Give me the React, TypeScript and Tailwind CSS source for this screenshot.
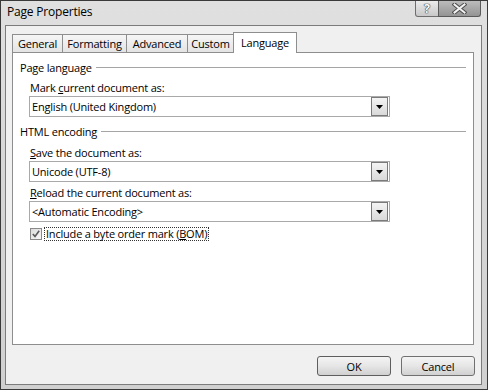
import React from "react";

const F = "font-['Open_Sans','Noto_Sans',sans-serif] tracking-[-0.2px]";

function Combo({ value }: { value: string }) {
  return (
    <div className="ml-[16px] flex h-[21px] w-[361px] items-center border border-[#a9a9a9] bg-white pl-[2px] pr-[1px]">
      <span className="flex-1 text-[11px] leading-[15px] text-black">{value}</span>
      <div className="flex h-[19px] w-[17px] items-center justify-center border border-[#7a7a7a] bg-gradient-to-b from-[#f4f4f4] to-[#d9d9d9]">
        <svg width="7" height="4" viewBox="0 0 7 4">
          <path d="M0 0 H7 L3.5 4 Z" fill="#000" />
        </svg>
      </div>
    </div>
  );
}

function Heading({ text }: { text: string }) {
  return (
    <div className="flex h-[15px] items-center pl-[7px] pr-[7px]">
      <span className="text-[11px] leading-[15px] text-black">{text}</span>
      <div className="ml-[4px] h-px flex-1 bg-[#a5a5a5]" />
    </div>
  );
}

function Label({ children }: { children: React.ReactNode }) {
  return (
    <div className="h-[15px] pl-[17px] text-[11px] leading-[15px] text-black">{children}</div>
  );
}

export default function App() {
  const tabs = [
    { name: "General", w: "w-[51px]" },
    { name: "Formatting", w: "w-[65px]" },
    { name: "Advanced", w: "w-[62px]" },
    { name: "Custom", w: "w-[47px]" },
  ];
  return (
    <div
      className={`${F} relative flex h-[390px] w-[488px] flex-col border border-[#3a3a3a] bg-gradient-to-b from-[#e0e0e0] via-[#d6d6d6] to-[#d0d0d0]`}
    >
      {/* title bar */}
      <div className="flex h-[24px] items-start justify-between">
        <div className="pl-[6px] pt-[3px] text-[12px] leading-[16px] text-black">Page Properties</div>
        <div className="mr-[6px] flex">
          <div className="flex h-[16px] w-[24px] items-center justify-center rounded-bl-[3px] border border-t-0 border-[#6e6e6e] bg-gradient-to-b from-[#ececec] to-[#c8c8c8]">
            <span className="text-[12px] font-bold leading-[14px] text-white [text-shadow:0_0_1px_#333,0_0_1px_#333,0_0_1px_#333]">?</span>
          </div>
          <div className="-ml-px flex h-[16px] w-[43px] items-center justify-center rounded-br-[3px] border border-t-0 border-[#5a5a5a] bg-gradient-to-b from-[#bcbcbc] to-[#949494]">
            <svg width="15" height="11" viewBox="0 0 15 11">
              <path d="M2.5 1.5 L12.5 9.5 M12.5 1.5 L2.5 9.5" stroke="#4a4a4a" strokeWidth="4" strokeLinecap="square" />
              <path d="M2.5 1.5 L12.5 9.5 M12.5 1.5 L2.5 9.5" stroke="#f2f2f2" strokeWidth="2" strokeLinecap="square" />
            </svg>
          </div>
        </div>
      </div>

      {/* client area */}
      <div className="ml-[4px] flex h-[360px] w-[477px] flex-col border border-[#7c7c7c] bg-[#f0f0f0]">
        <div className="pl-[6px] pt-[6px]">
          {/* tab strip */}
          <div className="flex h-[20px] items-end">
            {tabs.map((t, i) => (
              <div
                key={t.name}
                className={`${t.w} ${i > 0 ? "-ml-px" : ""} flex h-[18px] items-center justify-center border border-b-0 border-[#8e8e8e] bg-gradient-to-b from-[#f6f6f6] to-[#e4e4e4] text-[11px] leading-[15px] text-black`}
              >
                {t.name}
              </div>
            ))}
            <div className="relative z-10 -mb-px -ml-px flex h-[21px] w-[64px] items-start justify-center border border-b-0 border-[#8e8e8e] bg-white pt-[2px] text-[11px] leading-[15px] text-black">
              Language
            </div>
          </div>
          {/* panel */}
          <div className="flex h-[293px] w-[462px] flex-col border border-[#8e8e8e] bg-white">
            <div className="mt-[7px]">
              <Heading text="Page language" />
            </div>
            <div className="mt-[5px]">
              <Label>
                Mark <u>c</u>urrent document as:
              </Label>
            </div>
            <div className="mt-[1px]">
              <Combo value="English (United Kingdom)" />
            </div>
            <div className="mt-[7px]">
              <Heading text="HTML encoding" />
            </div>
            <div className="mt-[6px]">
              <Label>
                <u>S</u>ave the document as:
              </Label>
            </div>
            <div className="mt-[1px]">
              <Combo value="Unicode (UTF-8)" />
            </div>
            <div className="mt-[3px]">
              <Label>
                <u>R</u>eload the current document as:
              </Label>
            </div>
            <div className="mt-[1px]">
              <Combo value="<Automatic Encoding>" />
            </div>
            <div className="mt-[5px] flex h-[14px] items-center pl-[17px]">
              <div className="flex h-[12px] w-[12px] items-center justify-center border border-[#8a8a8a] bg-gradient-to-br from-[#dcdcdc] to-[#f8f8f8]">
                <svg width="8" height="8" viewBox="0 0 8 8">
                  <path d="M0.8 4 L3 6.4 L7.2 0.8" stroke="#5a5a5a" strokeWidth="1.6" fill="none" />
                </svg>
              </div>
              <div className="ml-[2px] border border-dotted border-[#333] px-[1px] text-[11px] leading-[12px] text-black">
                Include a byte order mark (<u>B</u>OM)
              </div>
            </div>
          </div>
        </div>
        {/* buttons */}
        <div className="mt-[11px] flex justify-end gap-[10px] pr-[6px]">
          <div className="flex h-[20px] w-[74px] items-center justify-center rounded-[3px] border border-[#5e5e5e] bg-gradient-to-b from-[#f4f4f4] via-[#e6e6e6] to-[#d0d0d0] text-[11px] leading-[15px] text-black">
            OK
          </div>
          <div className="flex h-[20px] w-[74px] items-center justify-center rounded-[3px] border border-[#707070] bg-gradient-to-b from-[#f4f4f4] via-[#e6e6e6] to-[#d0d0d0] text-[11px] leading-[15px] text-black">
            Cancel
          </div>
        </div>
      </div>
    </div>
  );
}
